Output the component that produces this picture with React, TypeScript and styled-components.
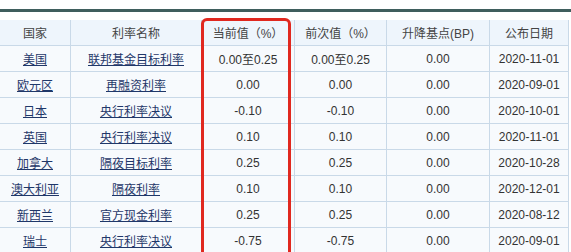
import styled, { createGlobalStyle } from "styled-components";

type Rate = {
  country: string;
  name: string;
  current: string;
  previous: string;
  change: string;
  date: string;
};

const rates: Rate[] = [
  { country: "美国", name: "联邦基金目标利率", current: "0.00至0.25", previous: "0.00至0.25", change: "0.00", date: "2020-11-01" },
  { country: "欧元区", name: "再融资利率", current: "0.00", previous: "0.00", change: "0.00", date: "2020-09-01" },
  { country: "日本", name: "央行利率决议", current: "-0.10", previous: "-0.10", change: "0.00", date: "2020-10-01" },
  { country: "英国", name: "央行利率决议", current: "0.10", previous: "0.10", change: "0.00", date: "2020-11-01" },
  { country: "加拿大", name: "隔夜目标利率", current: "0.25", previous: "0.25", change: "0.00", date: "2020-10-28" },
  { country: "澳大利亚", name: "隔夜利率", current: "0.10", previous: "0.10", change: "0.00", date: "2020-12-01" },
  { country: "新西兰", name: "官方现金利率", current: "0.25", previous: "0.25", change: "0.00", date: "2020-08-12" },
  { country: "瑞士", name: "央行利率决议", current: "-0.75", previous: "-0.75", change: "0.00", date: "2020-09-01" },
];

// widths exclude the collapsed 1px border
const columns = [
  { title: "国家", width: 70 },
  { title: "利率名称", width: 130 },
  { title: "当前值（%）", width: 92 },
  { title: "前次值（%）", width: 91 },
  { title: "升降基点(BP)", width: 102 },
  { title: "公布日期", width: 78 },
];

const GlobalStyle = createGlobalStyle`
  html, body {
    margin: 0;
    padding: 0;
    background: #ffffff;
    overflow: hidden;
  }
`;

const Page = styled.div`
  position: relative;
  width: 571px;
  height: 252px;
  overflow: hidden;
  font-family: "Liberation Sans", "Noto Sans CJK SC", sans-serif;
  font-size: 12px;
  color: #333333;
`;

const TopRule = styled.div`
  margin-top: 9px;
  height: 3px;
  background: #3f5e5d;
`;

const Table = styled.table`
  margin-top: 8px;
  margin-left: -1px;
  border-collapse: collapse;
  table-layout: fixed;
  width: 569px;
  background: #f7fafd;
`;

const HeadCell = styled.th<{ $w: number }>`
  width: ${(p) => p.$w}px;
  height: 25px;
  padding: 0;
  border: 1px solid #c9d9e8;
  border-top: none;
  background: #eef5fc;
  font-weight: normal;
  font-size: 12px;
  color: #444444;
  text-align: center;
`;

const Cell = styled.td`
  height: 25px;
  padding: 0;
  border: 1px solid #c9d9e8;
  text-align: center;
  font-size: 12px;
  color: #333333;
  white-space: nowrap;
`;

const RateLink = styled.a`
  color: #1f3769;
  text-decoration: underline;
  cursor: pointer;
`;

const Highlight = styled.div`
  position: absolute;
  left: 201px;
  top: 18px;
  width: 84px;
  height: 260px;
  border: 3px solid #e0281f;
  border-radius: 6px;
  pointer-events: none;
`;

export default function App() {
  return (
    <>
      <GlobalStyle />
      <Page>
        <TopRule />
        <Table>
          <thead>
            <tr>
              {columns.map((c) => (
                <HeadCell key={c.title} $w={c.width}>
                  {c.title}
                </HeadCell>
              ))}
            </tr>
          </thead>
          <tbody>
            {rates.map((r) => (
              <tr key={r.country}>
                <Cell>
                  <RateLink>{r.country}</RateLink>
                </Cell>
                <Cell>
                  <RateLink>{r.name}</RateLink>
                </Cell>
                <Cell>{r.current}</Cell>
                <Cell>{r.previous}</Cell>
                <Cell>{r.change}</Cell>
                <Cell>{r.date}</Cell>
              </tr>
            ))}
          </tbody>
        </Table>
        <Highlight />
      </Page>
    </>
  );
}
